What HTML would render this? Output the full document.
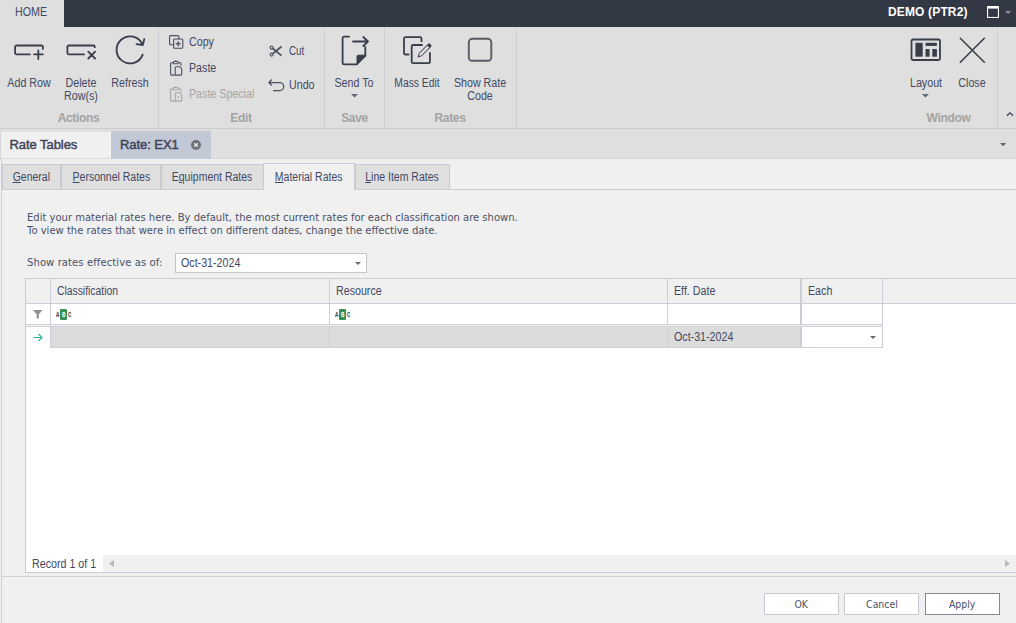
<!DOCTYPE html>
<html><head><meta charset="utf-8"><title>Rate: EX1</title>
<style>
*{box-sizing:border-box;margin:0;padding:0}
html,body{width:1016px;height:623px;overflow:hidden;background:#f0f0f0}
body{position:relative;font-family:"Liberation Sans",Arial,sans-serif;font-size:12px;color:#424862}
.abs{position:absolute}
.t{position:absolute;white-space:nowrap;line-height:13px;transform:scaleX(.89);transform-origin:0 0}
.c{transform:translateX(-50%) scaleX(.89);transform-origin:50% 50%;text-align:center}
.dv{font-family:"DejaVu Sans",Verdana,sans-serif;font-size:10px;letter-spacing:0;transform:none;color:#4a5068}
.nb{transform:none}
#topbar{left:0;top:0;width:1016px;height:27px;background:#333845}
#home{left:0;top:0;width:64px;height:27px;background:#dfdfdf}
#ribbon{left:0;top:27px;width:1016px;height:101px;background:#dfdfdf}
.sep{position:absolute;top:27px;width:1px;height:101px;background:#cdd0d5}
.gl{position:absolute;top:111px;font-weight:bold;font-size:12px;color:#a3a3a3;letter-spacing:-0.35px;white-space:nowrap;line-height:14px;transform:translateX(-50%)}
.dis{color:#a6a6a6}
svg{position:absolute;overflow:visible}
.st{fill:none;stroke:#393e4b;stroke-width:1.8;stroke-linecap:round;stroke-linejoin:round}
.st.sm{stroke-width:1.1;stroke:#4a4f5c}
.hd{position:absolute;top:279px;height:24px;background:#f0f0f0}
.ln{position:absolute;background:#ccd0d6}
.btn{position:absolute;top:593px;height:22px;width:75px;background:#fff;border:1px solid #c6cad1;text-align:center;line-height:21px}
.btn span{display:inline-block;transform:scaleX(.935)}
.stab{position:absolute;top:164px;height:25px;background:#dfdfdf;border:1px solid #c8ccd2;border-bottom:none;line-height:24px;text-align:center;white-space:nowrap}
.stab span{display:inline-block;transform:scaleX(.875)}
u{text-decoration:underline;text-underline-offset:1px}
</style></head><body>

<!-- top bar -->
<div class="abs" id="topbar"></div>
<div class="abs" id="home"></div>
<div class="t" style="left:15px;top:5px;line-height:14px">HOME</div>
<div class="t nb" style="left:888px;top:4.500px;font-size:12px;font-weight:bold;color:#fff;letter-spacing:0.15px;line-height:14px">DEMO (PTR2)</div>
<svg style="left:987px;top:6px" width="13" height="12"><rect x="0" y="0" width="12" height="12" rx="0.8" fill="#fff"/><rect x="1.100" y="2.600" width="9.800" height="8.300" fill="#333845"/></svg>
<svg style="left:1005px;top:11px" width="6" height="3"><path d="M0 0h6.200L3.100 3.200z" fill="#8a8d95"/></svg>

<!-- ribbon -->
<div class="abs" id="ribbon"></div>
<div class="abs" style="left:0;top:128px;width:1016px;height:1px;background:#cdcdcd"></div>
<div class="abs" style="left:0;top:129px;width:1016px;height:2px;background:#dfdfdf"></div>
<div class="sep" style="left:158px"></div>
<div class="sep" style="left:324px"></div>
<div class="sep" style="left:384px"></div>
<div class="sep" style="left:516px"></div>
<div class="sep" style="left:997px"></div>

<!-- Actions -->
<svg style="left:13px;top:43px" width="33" height="19"><path class="st" d="M16.800 11.400H3.600a1.500 1.500 0 0 1-1.500-1.500V4a1.500 1.500 0 0 1 1.500-1.500H28.400a1.500 1.500 0 0 1 1.500 1.500V5.900M21 11.300H29.900M25.300 7.500V16"/></svg>
<svg style="left:65px;top:43px" width="33" height="19"><path class="st" d="M19.100 11.400H3.900a1.500 1.500 0 0 1-1.500-1.500V4a1.500 1.500 0 0 1 1.500-1.500H28.300a1.500 1.500 0 0 1 1.500 1.500V4.200M23.300 8.700l6.800 6.800M30.100 8.700l-6.800 6.800"/></svg>
<svg style="left:115px;top:35px" width="32" height="30"><path class="st" d="M27.700 19.600A13.500 13.500 0 1 1 27.300 9.200M21.500 9.200l6.300 0.800l1.500-6"/></svg>
<div class="t c" style="left:28.500px;top:77px">Add Row</div>
<div class="t c" style="left:81px;top:77px">Delete<br>Row(s)</div>
<div class="t c" style="left:130px;top:77px">Refresh</div>
<div class="gl" style="left:78.500px">Actions</div>

<!-- Edit -->
<svg style="left:169px;top:35px" width="15" height="15"><path class="st sm" d="M4.500 9.800H1.600a1 1 0 0 1-1-1V1.600a1 1 0 0 1 1-1h7.200a1 1 0 0 1 1 1v2.300"/><rect class="st sm" x="4.600" y="4" width="9.200" height="9.200" rx="1"/><path d="M6.700 8.700h5M9.200 6.200v5" fill="none" stroke="#5d626e" stroke-width="1.600"/></svg>
<div class="t" style="left:189px;top:36px">Copy</div>
<svg style="left:170px;top:60px" width="13" height="16"><path class="st sm" d="M4.300 15.100H1.600a1 1 0 0 1-1-1V3.700a1 1 0 0 1 1-1h1.600M8.400 2.700H10a1 1 0 0 1 1 1v1.500M3.400 3.800V2.300a.8.800 0 0 1 .8-.8h3.200a.8.800 0 0 1 .8.800v1.500zM5.800 1.400V.6"/><path class="st sm" d="M5.200 15.100V7.700a1 1 0 0 1 1-1h3.500l2 2v5.400a1 1 0 0 1-1 1z"/></svg>
<div class="t" style="left:189px;top:62px">Paste</div>
<svg style="left:170px;top:86px" width="13" height="16"><g style="stroke:#a6a6a6"><path class="st" style="stroke-width:1.1;stroke:#a6a6a6" d="M4.300 15.100H1.600a1 1 0 0 1-1-1V3.700a1 1 0 0 1 1-1h1.600M8.400 2.700H10a1 1 0 0 1 1 1v1.500M3.400 3.800V2.300a.8.800 0 0 1 .8-.8h3.200a.8.800 0 0 1 .8.800v1.500zM5.800 1.400V.6"/><path class="st" style="stroke-width:1.1;stroke:#a6a6a6" d="M5.200 15.100V7.700a1 1 0 0 1 1-1h3.500l2 2v5.400a1 1 0 0 1-1 1z"/><path d="M7.600 9.800l2 1.300l-2 1.300z" fill="#a6a6a6" stroke="none"/></g></svg>
<div class="t dis" style="left:189px;top:88px">Paste Special</div>
<svg style="left:269px;top:45px" width="14" height="12"><circle class="st sm" cx="2.600" cy="2.600" r="1.500"/><circle class="st sm" cx="2.600" cy="9.600" r="1.500"/><path class="st" style="stroke-width:1.700;stroke:#4a4f5c;stroke-linecap:butt" d="M3.900 3.500L12.500 10.700M3.900 8.700L12.500 1.500"/></svg>
<div class="t" style="left:289px;top:45px;transform:scaleX(.82)">Cut</div>
<svg style="left:268px;top:79px" width="16" height="12"><path class="st sm" style="stroke-width:1.250" d="M5.600 11.500H11.700a4 4 0 0 0 0-8H0.900M3.400 1L0.900 3.500L3.400 6"/></svg>
<div class="t" style="left:289px;top:79px">Undo</div>
<div class="gl" style="left:241px">Edit</div>

<!-- Save -->
<svg style="left:341px;top:35px" width="29" height="31"><path class="st" d="M8.200 1.600H3.200A1.600 1.600 0 0 0 1.600 3.200v24.500a1.600 1.600 0 0 0 1.600 1.600H16M24.300 12v8.500"/><path d="M16 21.200a1 1 0 0 1 1-1h7.600v1l-8.600 8.600z" fill="#393e4b" stroke="#393e4b" stroke-width="1" stroke-linejoin="round"/><path class="st" d="M12 6.500h14.800M22.300 2l4.700 4.500L22.300 11"/></svg>
<div class="t c" style="left:354px;top:77px">Send To</div>
<svg style="left:351px;top:94px" width="7" height="4"><path d="M0 0h7L3.500 3.500z" fill="#646873"/></svg>
<div class="gl" style="left:354.500px">Save</div>

<!-- Rates -->
<svg style="left:402px;top:35px" width="31" height="30"><path class="st" d="M6.500 19.500H3.500a1.500 1.500 0 0 1-1.500-1.500V3.700a1.500 1.500 0 0 1 1.500-1.500h14.500a1.500 1.500 0 0 1 1.500 1.500v2.600"/><path class="st" d="M20 10H11.200a1.500 1.500 0 0 0-1.500 1.500v15.200a1.500 1.500 0 0 0 1.500 1.500h15.200a1.500 1.500 0 0 0 1.500-1.500V18"/><path d="M15.500 22.500l1.200-4.200L26.200 8.800a1.200 1.200 0 0 1 1.700 0l1.300 1.300a1.200 1.200 0 0 1 0 1.700L19.700 21.300z" fill="#393e4b"/><path d="M17.600 18.600l7.800-7.800l1.800 1.800l-7.800 7.800l-2.500.7z" fill="#dfdfdf"/></svg>
<div class="t c" style="left:416.500px;top:77px;transform:translateX(-50%) scaleX(.86)">Mass Edit</div>

<svg style="left:467px;top:37px" width="26" height="26"><rect x="1.800" y="1.800" width="22.500" height="22" rx="3.500" fill="none" stroke="#585b63" stroke-width="1.900"/></svg>
<div class="t c" style="left:480px;top:77px">Show Rate<br>Code</div>
<div class="gl" style="left:450px">Rates</div>

<!-- Window -->
<svg style="left:910px;top:38px" width="32" height="24"><rect class="st" x="1.500" y="1.500" width="28.500" height="20.500" rx="1.500"/><rect x="5.400" y="4.800" width="7.300" height="13.900" fill="#393e4b"/><rect x="15.500" y="4.800" width="11.400" height="3.100" fill="#393e4b"/><rect x="15.500" y="11" width="4.100" height="7.700" fill="#393e4b"/><rect x="22.300" y="11" width="4.600" height="7.700" fill="#393e4b"/></svg>
<div class="t c" style="left:925.500px;top:77px">Layout</div>
<svg style="left:922px;top:94px" width="7" height="4"><path d="M0 0h7L3.500 3.500z" fill="#646873"/></svg>
<svg style="left:959px;top:37px" width="27" height="26"><path class="st" style="stroke-width:1.600" d="M1.300 1.300l24 24M25.300 1.300l-24 24"/></svg>
<div class="t c" style="left:971.500px;top:77px">Close</div>
<div class="gl" style="left:948.500px">Window</div>
<svg style="left:1006px;top:111px" width="8" height="6"><path d="M1 4.800L4 1.800L7 4.800" fill="none" stroke="#393e4b" stroke-width="1.300"/></svg>

<!-- doc tabs -->
<div class="abs" style="left:0;top:131px;width:1016px;height:27px;background:#dfdfdf"></div>
<div class="abs" style="left:0;top:131px;width:110px;height:27px;background:#f0f0f0;border-left:1px solid #d4d6da;border-top:1px solid #dcdee2"></div>
<div class="abs" style="left:110px;top:131px;width:1px;height:27px;background:#f4f4f4"></div><div class="abs" style="left:111px;top:131px;width:100px;height:28px;background:#c2c8d5"></div>
<div class="t nb" style="left:9.500px;top:137px;font-size:13px;font-weight:normal;-webkit-text-stroke:0.45px #3f4459;letter-spacing:-0.06px;line-height:15px;color:#3f4459">Rate Tables</div>
<div class="t nb" style="left:120px;top:137px;font-size:13px;font-weight:normal;-webkit-text-stroke:0.45px #3f4459;letter-spacing:-0.06px;line-height:15px;color:#3f4459">Rate: EX1</div>
<svg style="left:191px;top:140px" width="10" height="10"><circle cx="5" cy="5" r="5" fill="#6f7177"/><path d="M3.200 3.200l3.600 3.600M6.800 3.200l-3.600 3.600" stroke="#e6e8ee" stroke-width="1.400"/></svg>
<svg style="left:1000px;top:143px" width="7" height="4"><path d="M0 0h6.200L3.100 3.200z" fill="#646873"/></svg>
<div class="abs" style="left:0;top:158px;width:111px;height:1px;background:#d8d9dc"></div><div class="abs" style="left:211px;top:158px;width:805px;height:1px;background:#d5d8dd"></div>
<div class="abs" style="left:1px;top:159px;width:1px;height:464px;background:#cdd0d5"></div>

<!-- sub tabs -->
<div class="abs" style="left:2px;top:189px;width:1014px;height:1px;background:#c8ccd2"></div>

<div class="abs" style="left:1px;top:576px;width:1015px;height:1px;background:#d2d2d2"></div>
<div class="stab" style="left:2px;width:59px"><span><u>G</u>eneral</span></div>
<div class="stab" style="left:61px;width:100px"><span><u>P</u>ersonnel Rates</span></div>
<div class="stab" style="left:161px;width:103px"><span>E<u>q</u>uipment Rates</span></div>
<div class="stab" style="left:355px;width:95px"><span><u>L</u>ine Item Rates</span></div>
<div class="stab" style="left:263px;width:92px;top:163px;height:27px;background:#f0f0f0;line-height:26px"><span><u>M</u>aterial Rates</span></div>

<!-- page text -->
<div class="t dv" style="left:27px;top:211px">Edit your material rates here. By default, the most current rates for each classification are shown.</div>
<div class="t dv" style="left:27px;top:224px">To view the rates that were in effect on different dates, change the effective date.</div>
<div class="t dv" style="left:27px;top:256px;letter-spacing:0.1px">Show rates effective as of:</div>
<div class="abs" style="left:175px;top:253px;width:192px;height:20px;background:#fff;border:1px solid #c4c6ca"></div>
<div class="t" style="left:180.500px;top:257px">Oct-31-2024</div>
<svg style="left:355px;top:262px" width="6" height="3"><path d="M0 0h6L3 3z" fill="#646873"/></svg>

<!-- grid -->
<div class="abs" style="left:25px;top:278px;width:991px;height:295px;background:#fff;border:1px solid #c9cdd3;border-right:none"></div>
<div class="hd" style="left:26px;width:990px"></div>
<div class="ln" style="left:26px;top:303px;width:990px;height:1px"></div>
<div class="ln" style="left:50px;top:279px;width:1px;height:69px"></div>
<div class="ln" style="left:329px;top:279px;width:1px;height:69px"></div>
<div class="ln" style="left:667px;top:279px;width:1px;height:69px"></div>
<div class="ln" style="left:800px;top:279px;width:2px;height:69px"></div>
<div class="ln" style="left:882px;top:279px;width:1px;height:69px"></div>
<div class="ln" style="left:26px;top:324px;width:857px;height:1px"></div>
<div class="abs" style="left:26px;top:325px;width:857px;height:1px;background:#f4f4f4"></div>
<div class="ln" style="left:26px;top:326px;width:857px;height:1px"></div>
<div class="abs" style="left:51px;top:327px;width:278px;height:20px;background:#dcdcdc"></div>
<div class="abs" style="left:330px;top:327px;width:337px;height:20px;background:#dcdcdc"></div>
<div class="abs" style="left:668px;top:327px;width:132px;height:20px;background:#dcdcdc"></div>
<div class="ln" style="left:51px;top:347px;width:832px;height:1px"></div>
<div class="t" style="left:56.500px;top:285px;transform:scaleX(.862)">Classification</div>
<div class="t" style="left:336px;top:285px">Resource</div>
<div class="t" style="left:674px;top:285px">Eff. Date</div>
<div class="t" style="left:808px;top:285px">Each</div>
<div class="t" style="left:673.500px;top:331px">Oct-31-2024</div>
<svg style="left:870px;top:336px" width="6" height="3"><path d="M0 0h6L3 3z" fill="#646873"/></svg>
<!-- filter icon -->
<svg style="left:33px;top:310px" width="10" height="9"><path d="M0 0h9.500L5.800 4.200V8.500H3.700V4.200z" fill="#8e8e8e"/></svg>
<!-- ABC icons -->
<div class="abs" style="left:60px;top:309px;width:7px;height:11px;background:#3a8f55;border-radius:1px"></div>
<div class="t nb" style="left:55.800px;top:310px;font-family:'Liberation Mono',monospace;font-size:7px;font-weight:bold;letter-spacing:3.300px;line-height:11px;color:#444;transform:scaleX(.8)"><span>A</span><span style="color:#fff">B</span><span>C</span></div>
<div class="abs" style="left:339px;top:309px;width:7px;height:11px;background:#3a8f55;border-radius:1px"></div>
<div class="t nb" style="left:334.800px;top:310px;font-family:'Liberation Mono',monospace;font-size:7px;font-weight:bold;letter-spacing:3.300px;line-height:11px;color:#444;transform:scaleX(.8)"><span>A</span><span style="color:#fff">B</span><span>C</span></div>
<!-- row arrow -->
<svg style="left:33px;top:333px" width="10" height="9"><path d="M0.500 4.500h8.500M5.500 1l3.500 3.500L5.500 8" fill="none" stroke="#27b3a0" stroke-width="1.100"/></svg>

<!-- footer of grid -->
<div class="abs" style="left:103px;top:555px;width:913px;height:17px;background:#f0f0f0"></div>
<div class="t" style="left:32px;top:558px;">Record 1 of 1</div>
<svg style="left:109px;top:560px" width="5" height="7"><path d="M5 0v7L0 3.500z" fill="#b9b9b9"/></svg>
<svg style="left:1005px;top:560px" width="5" height="7"><path d="M0 0v7L5 3.500z" fill="#b9b9b9"/></svg>

<!-- buttons -->
<div class="btn dv" style="left:764px"><span>OK</span></div>
<div class="btn dv" style="left:844px"><span>Cancel</span></div>
<div class="btn dv" style="left:925px;border-color:#85888f"><span>Apply</span></div>
</body></html>
